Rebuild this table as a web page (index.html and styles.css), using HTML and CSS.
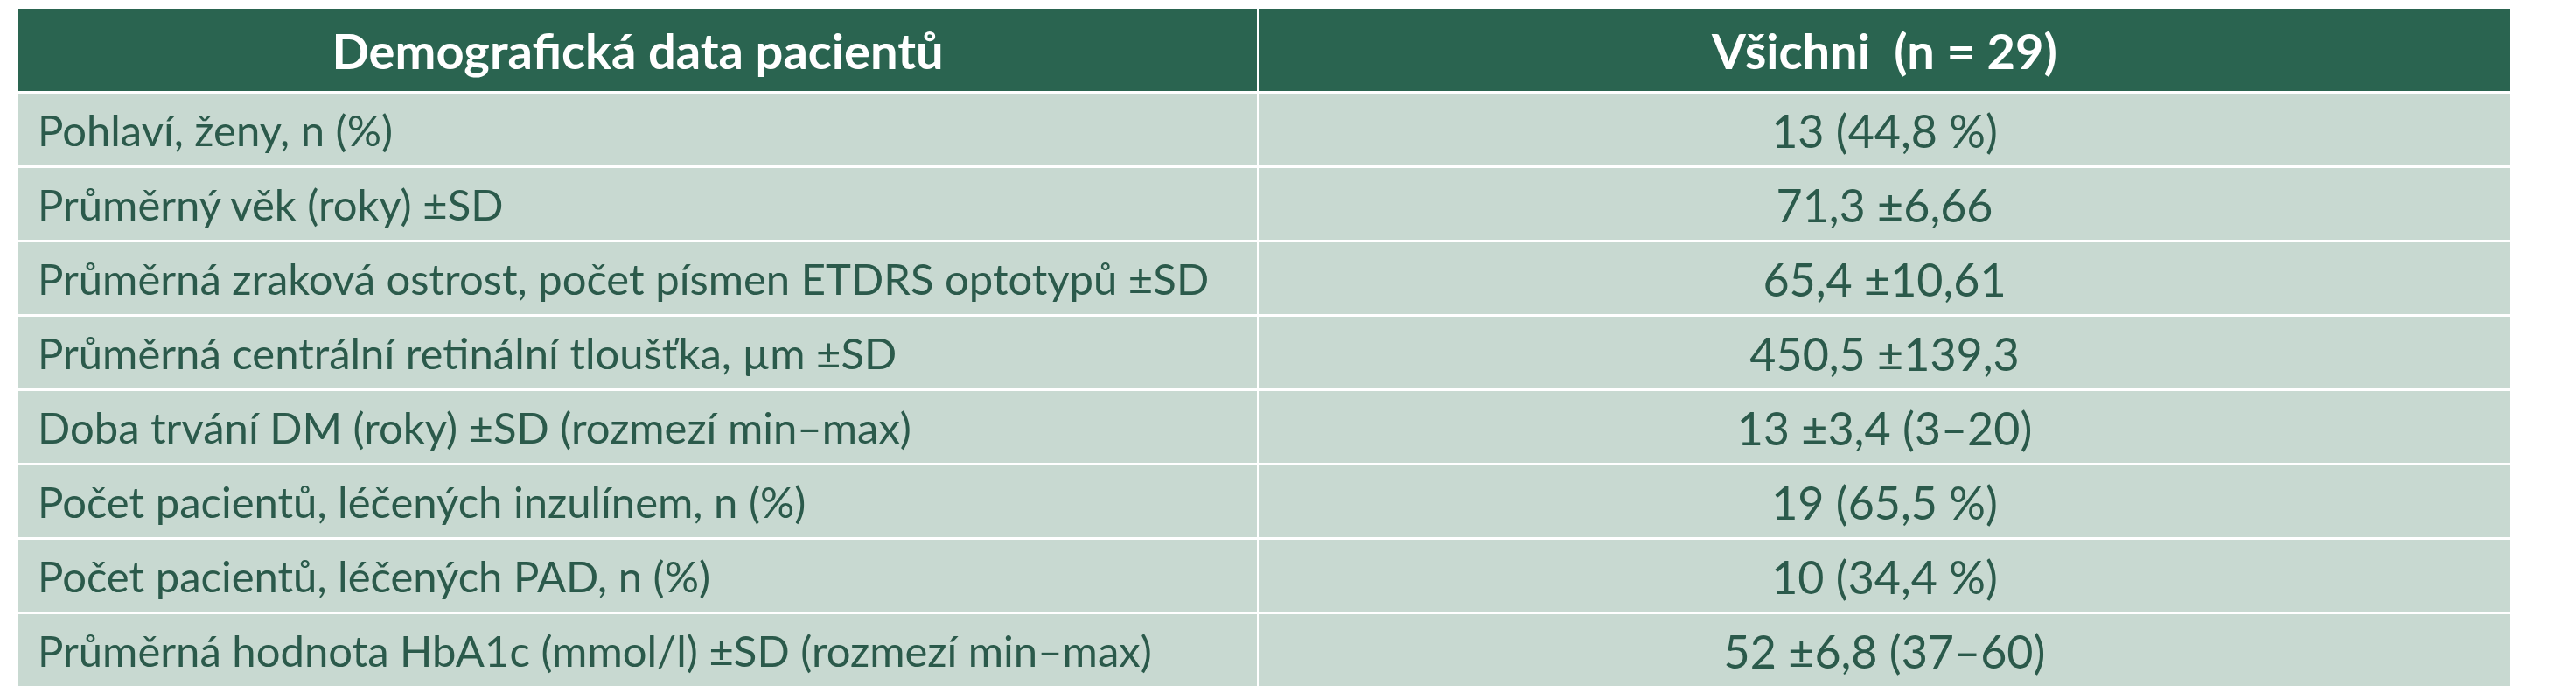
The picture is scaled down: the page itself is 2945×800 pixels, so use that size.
FILE: index.html
```html
<!DOCTYPE html>
<html lang="cs">
<head>
<meta charset="utf-8">
<title>Demografická data pacientů</title>
<link rel="stylesheet" href="styles.css">
</head>
<body>
<div class="page">
  <div class="table">
    <div class="row head">
      <div class="cell label">Demografická data pacientů</div>
      <div class="cell value">Všichni&nbsp; (n = 29)</div>
    </div>
    <div class="row">
      <div class="cell label">Pohlaví, ženy, n (%)</div>
      <div class="cell value">13 (44,8 %)</div>
    </div>
    <div class="row">
      <div class="cell label">Průměrný věk (roky) ±SD</div>
      <div class="cell value">71,3 ±6,66</div>
    </div>
    <div class="row">
      <div class="cell label">Průměrná zraková ostrost, počet písmen ETDRS optotypů ±SD</div>
      <div class="cell value">65,4 ±10,61</div>
    </div>
    <div class="row">
      <div class="cell label">Průměrná centrální retinální tloušťka, µm ±SD</div>
      <div class="cell value">450,5 ±139,3</div>
    </div>
    <div class="row">
      <div class="cell label">Doba trvání DM (roky) ±SD (rozmezí min–max)</div>
      <div class="cell value">13 ±3,4 (3–20)</div>
    </div>
    <div class="row">
      <div class="cell label">Počet pacientů, léčených inzulínem, n (%)</div>
      <div class="cell value">19 (65,5 %)</div>
    </div>
    <div class="row">
      <div class="cell label">Počet pacientů, léčených PAD, n (%)</div>
      <div class="cell value">10 (34,4 %)</div>
    </div>
    <div class="row">
      <div class="cell label">Průměrná hodnota HbA1c (mmol/l) ±SD (rozmezí min–max)</div>
      <div class="cell value">52 ±6,8 (37–60)</div>
    </div>
  </div>
</div>
</body>
</html>
```

FILE: styles.css
```css
html, body {
  margin: 0;
  padding: 0;
  background: #ffffff;
}

.page {
  padding: 10px 0 0 21px;
}

.table {
  width: 2849px;
  display: flex;
  flex-direction: column;
  font-family: "Lato", "Open Sans", sans-serif;
}

.row {
  display: grid;
  grid-template-columns: 1416px 1fr;
  column-gap: 2px;
  height: 82px;
  border-top: 3px solid #ffffff;
  background: #ffffff;
}

.row.head {
  height: 94px;
  border-top: 0;
}

.cell {
  display: flex;
  align-items: center;
  background: #c8d9d1;
  color: #2b5a4b;
  font-size: 49px;
}

.cell.label {
  padding-left: 22px;
}

.cell.value {
  justify-content: center;
  padding-top: 2px;
  font-size: 52px;
}

.head .cell {
  background: #2a6450;
  color: #ffffff;
  font-weight: 700;
  justify-content: center;
  padding-left: 0;
  padding-top: 0;
  font-size: 56px;
}
```
